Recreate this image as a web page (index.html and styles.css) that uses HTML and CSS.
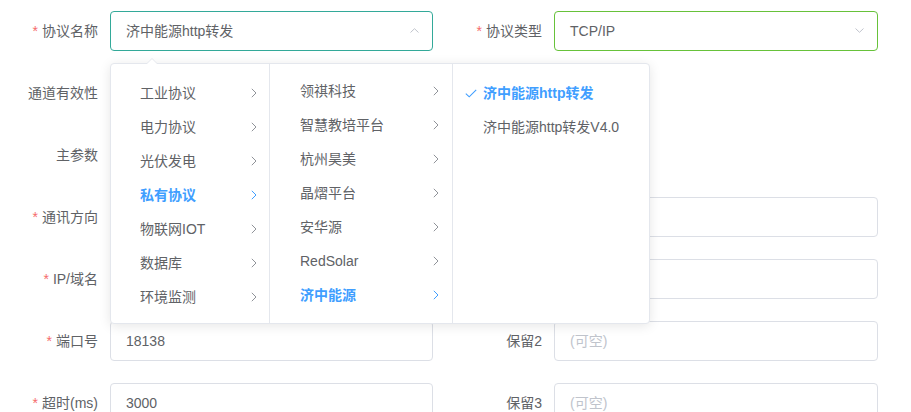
FILE: index.html
```html
<!DOCTYPE html>
<html lang="zh-CN">
<head>
    <meta charset="UTF-8">
    <title>通道配置</title>
    <link rel="stylesheet" href="styles.css">
</head>
<body>
<form class="form">
    <div class="item">
        <label class="label"><span class="req">*</span>协议名称</label>
        <div class="control">
            <div class="input focus">
                <span>济中能源http转发</span>
                <svg class="suffix" width="9" height="5" viewBox="0 0 9 5"><path d="M0.5 4.5 L4.5 0.7 L8.5 4.5" fill="none" stroke="#c0c4cc" stroke-width="1"/></svg>
            </div>

            <div class="cascader">
                <ul class="menu first">
                    <li>工业协议<svg class="arrow" width="6" height="10" viewBox="0 0 6 10"><path d="M0.8 0.8 L5 5 L0.8 9.2" fill="none" stroke="currentColor" stroke-width="1"/></svg></li>
                    <li>电力协议<svg class="arrow" width="6" height="10" viewBox="0 0 6 10"><path d="M0.8 0.8 L5 5 L0.8 9.2" fill="none" stroke="currentColor" stroke-width="1"/></svg></li>
                    <li>光伏发电<svg class="arrow" width="6" height="10" viewBox="0 0 6 10"><path d="M0.8 0.8 L5 5 L0.8 9.2" fill="none" stroke="currentColor" stroke-width="1"/></svg></li>
                    <li class="active">私有协议<svg class="arrow" width="6" height="10" viewBox="0 0 6 10"><path d="M0.8 0.8 L5 5 L0.8 9.2" fill="none" stroke="currentColor" stroke-width="1"/></svg></li>
                    <li>物联网IOT<svg class="arrow" width="6" height="10" viewBox="0 0 6 10"><path d="M0.8 0.8 L5 5 L0.8 9.2" fill="none" stroke="currentColor" stroke-width="1"/></svg></li>
                    <li>数据库<svg class="arrow" width="6" height="10" viewBox="0 0 6 10"><path d="M0.8 0.8 L5 5 L0.8 9.2" fill="none" stroke="currentColor" stroke-width="1"/></svg></li>
                    <li>环境监测<svg class="arrow" width="6" height="10" viewBox="0 0 6 10"><path d="M0.8 0.8 L5 5 L0.8 9.2" fill="none" stroke="currentColor" stroke-width="1"/></svg></li>
                </ul>
                <ul class="menu second">
                    <li>领祺科技<svg class="arrow" width="6" height="10" viewBox="0 0 6 10"><path d="M0.8 0.8 L5 5 L0.8 9.2" fill="none" stroke="currentColor" stroke-width="1"/></svg></li>
                    <li>智慧教培平台<svg class="arrow" width="6" height="10" viewBox="0 0 6 10"><path d="M0.8 0.8 L5 5 L0.8 9.2" fill="none" stroke="currentColor" stroke-width="1"/></svg></li>
                    <li>杭州昊美<svg class="arrow" width="6" height="10" viewBox="0 0 6 10"><path d="M0.8 0.8 L5 5 L0.8 9.2" fill="none" stroke="currentColor" stroke-width="1"/></svg></li>
                    <li>晶熠平台<svg class="arrow" width="6" height="10" viewBox="0 0 6 10"><path d="M0.8 0.8 L5 5 L0.8 9.2" fill="none" stroke="currentColor" stroke-width="1"/></svg></li>
                    <li>安华源<svg class="arrow" width="6" height="10" viewBox="0 0 6 10"><path d="M0.8 0.8 L5 5 L0.8 9.2" fill="none" stroke="currentColor" stroke-width="1"/></svg></li>
                    <li>RedSolar<svg class="arrow" width="6" height="10" viewBox="0 0 6 10"><path d="M0.8 0.8 L5 5 L0.8 9.2" fill="none" stroke="currentColor" stroke-width="1"/></svg></li>
                    <li class="active">济中能源<svg class="arrow" width="6" height="10" viewBox="0 0 6 10"><path d="M0.8 0.8 L5 5 L0.8 9.2" fill="none" stroke="currentColor" stroke-width="1"/></svg></li>
                </ul>
                <ul class="menu third">
                    <li class="active"><svg class="check" width="12" height="9" viewBox="0 0 12 9"><path d="M0.8 4.6 L4.2 7.8 L11.2 0.8" fill="none" stroke="currentColor" stroke-width="1.1"/></svg>济中能源http转发</li>
                    <li>济中能源http转发V4.0</li>
                </ul>
            </div>
        </div>
    </div>
    <div class="item">
        <label class="label"><span class="req">*</span>协议类型</label>
        <div class="control">
            <div class="input success">
                <span>TCP/IP</span>
                <svg class="suffix" width="9" height="5" viewBox="0 0 9 5"><path d="M0.5 0.5 L4.5 4.3 L8.5 0.5" fill="none" stroke="#c0c4cc" stroke-width="1"/></svg>
            </div>
        </div>
    </div>

    <div class="item">
        <label class="label">通道有效性</label>
        <div class="control"></div>
    </div>
    <div class="item"></div>

    <div class="item">
        <label class="label">主参数</label>
        <div class="control"></div>
    </div>
    <div class="item"></div>

    <div class="item">
        <label class="label"><span class="req">*</span>通讯方向</label>
        <div class="control"><div class="input"></div></div>
    </div>
    <div class="item">
        <label class="label">设备地址</label>
        <div class="control"><div class="input"></div></div>
    </div>

    <div class="item">
        <label class="label"><span class="req">*</span>IP/域名</label>
        <div class="control"><div class="input"></div></div>
    </div>
    <div class="item">
        <label class="label">保留1</label>
        <div class="control"><div class="input"></div></div>
    </div>

    <div class="item">
        <label class="label"><span class="req">*</span>端口号</label>
        <div class="control"><div class="input"><span>18138</span></div></div>
    </div>
    <div class="item">
        <label class="label">保留2</label>
        <div class="control"><div class="input"><span class="placeholder">(可空)</span></div></div>
    </div>

    <div class="item">
        <label class="label"><span class="req">*</span>超时(ms)</label>
        <div class="control"><div class="input"><span>3000</span></div></div>
    </div>
    <div class="item">
        <label class="label">保留3</label>
        <div class="control"><div class="input"><span class="placeholder">(可空)</span></div></div>
    </div>
</form>
</body>
</html>
```

FILE: styles.css
```css
html, body {
  margin: 0;
  padding: 0;
  background: #fff;
  overflow: hidden;
}
body {
  font-family: 'Liberation Sans', 'Noto Sans CJK SC', sans-serif;
  font-size: 14px;
  color: #606266;
}
.form {
  display: grid;
  grid-template-columns: 433px 434px;
  column-gap: 11px;
  row-gap: 22px;
  padding-top: 11px;
  margin: 0;
}
.item {
  display: flex;
  height: 40px;
}
.label {
  width: 110px;
  flex: none;
  box-sizing: border-box;
  padding-right: 12px;
  text-align: right;
  line-height: 40px;
  color: #606266;
}
.req {
  color: #f56c6c;
  margin-right: 4px;
}
.control {
  flex: 1;
  position: relative;
}
.input {
  height: 40px;
  box-sizing: border-box;
  border: 1px solid #dcdfe6;
  border-radius: 4px;
  padding: 0 15px;
  line-height: 38px;
  color: #606266;
  background: #fff;
  position: relative;
}
.input.focus {
  border-color: #33a999;
}
.input.success {
  border-color: #67c23a;
}
.placeholder {
  color: #c0c4cc;
}
.suffix {
  position: absolute;
  right: 13px;
  top: 16px;
}

/* cascader dropdown */
.cascader {
  position: absolute;
  top: 52px;
  left: 0;
  z-index: 10;
  display: flex;
  background: #fff;
  border: 1px solid #e4e7ed;
  border-radius: 4px;
  box-shadow: 0 2px 12px 0 rgba(0, 0, 0, 0.1);
}
.cascader::before,
.cascader::after {
  content: '';
  position: absolute;
  left: 35px;
  border: 6px solid transparent;
  border-top-width: 0;
}
.cascader::before {
  top: -6px;
  border-bottom-color: #e4e7ed;
}
.cascader::after {
  top: -5px;
  border-bottom-color: #fff;
}
.menu {
  list-style: none;
  margin: 0;
  height: 259px;
  box-sizing: border-box;
  padding: 12px 0 0;
}
.menu li {
  position: relative;
  height: 34px;
  line-height: 34px;
  padding-left: 30px;
  white-space: nowrap;
}
.menu.first {
  width: 159px;
  border-right: 1px solid #e4e7ed;
}
.menu.first li {
  padding-left: 29px;
}
.menu.second {
  width: 183px;
  border-right: 1px solid #e4e7ed;
  padding-top: 10px;
}
.menu.third {
  width: 196px;
}
.menu li.active {
  color: #409eff;
  font-weight: bold;
}
.arrow {
  position: absolute;
  top: 12px;
  right: 12px;
  color: #909399;
}
.menu.second .arrow {
  right: 13px;
}
.active .arrow {
  color: #409eff;
}
.check {
  position: absolute;
  left: 12px;
  top: 13px;
  color: #409eff;
}
```
